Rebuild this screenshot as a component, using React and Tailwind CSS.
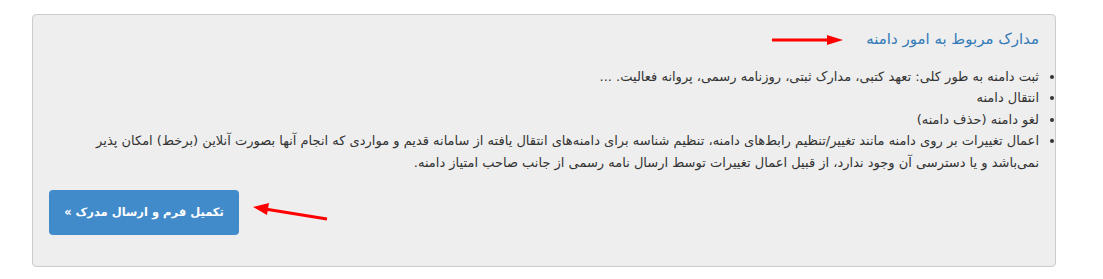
export default function App() {
  const items = [
    'ثبت دامنه به طور کلی: تعهد کتبی، مدارک ثبتی، روزنامه رسمی، پروانه فعالیت. ...',
    'انتقال دامنه',
    'لغو دامنه (حذف دامنه)',
    'اعمال تغییرات بر روی دامنه مانند تغییر/تنظیم رابط‌های دامنه، تنظیم شناسه برای دامنه‌های انتقال یافته از سامانه قدیم و مواردی که انجام آنها بصورت آنلاین (برخط) امکان پذیر نمی‌باشد و یا دسترسی آن وجود ندارد، از قبیل اعمال تغییرات توسط ارسال نامه رسمی از جانب صاحب امتیاز دامنه.',
  ];

  return (
    <div className="w-[1103px] h-[279px] bg-white pt-[14px] pl-[32px]" style={{ fontFamily: 'Tahoma, "DejaVu Sans", sans-serif' }}>
      <div dir="rtl" className="relative w-[1024px] h-[253px] bg-[#eeeeee] border border-[#cccccc] rounded-[4px] pr-[16px] pl-[16px] pt-[14px]">
        {/* Title */}
        <h4 className="text-[15px] leading-[20px] text-[#337ab7] font-normal">
          مدارک مربوط به امور دامنه
        </h4>

        <ul className="list-disc mt-[17px] pr-0 text-[13px] leading-[21.4px] text-[#333333]">
          {items.map(t => (
            <li key={t}>{t}</li>
          ))}
        </ul>

        <div className="flex justify-end mt-[17px]">
          <button className="w-[190px] h-[45px] bg-[#428bca] text-white text-[11.5px] font-bold rounded-[4px]">
            تکمیل فرم و ارسال مدرک »
          </button>
        </div>

        {/* red arrows */}
        <svg className="absolute left-[738px] top-[18px]" width="74" height="14" viewBox="0 0 74 14">
          <line x1="1" y1="7" x2="58" y2="7" stroke="#ff0000" strokeWidth="3" />
          <polygon points="56,2 72,7 56,12" fill="#ff0000" />
        </svg>
        <svg className="absolute left-[218px] top-[188px]" width="78" height="20" viewBox="0 0 78 20">
          <line x1="76" y1="16" x2="14" y2="6" stroke="#ff0000" strokeWidth="3" />
          <polygon points="2,4 18,0 16,12" fill="#ff0000" />
        </svg>
      </div>
    </div>
  );
}
